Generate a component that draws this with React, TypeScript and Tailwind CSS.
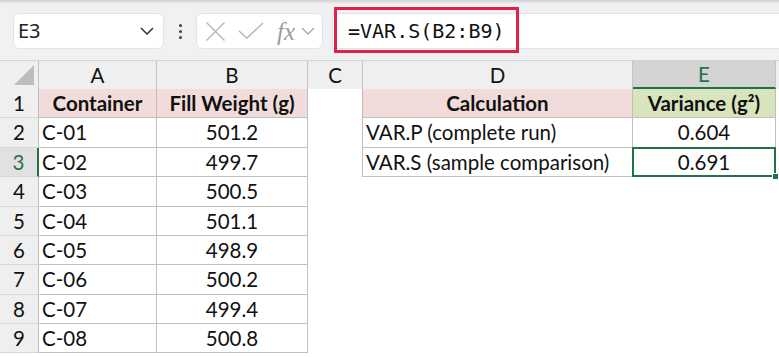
import React from 'react'

const rows = [
  { a: 'Container', b: 'Fill Weight (g)', d: 'Calculation', e: 'Variance (g²)', head: true },
  { a: 'C-01', b: '501.2', d: 'VAR.P (complete run)', e: '0.604' },
  { a: 'C-02', b: '499.7', d: 'VAR.S (sample comparison)', e: '0.691' },
  { a: 'C-03', b: '500.5' },
  { a: 'C-04', b: '501.1' },
  { a: 'C-05', b: '498.9' },
  { a: 'C-06', b: '500.2' },
  { a: 'C-07', b: '499.4' },
  { a: 'C-08', b: '500.8' },
]

const heights = ['h-[29px]', 'h-[30px]', 'h-[29px]', 'h-[30px]', 'h-[29px]', 'h-[29px]', 'h-[30px]', 'h-[29px]', 'h-[29px]']

const cellFont = { fontFamily: 'Lato, "Open Sans", sans-serif' }

const NameBox = () => (
  <div className="w-[151px] h-[36px] bg-white rounded-[6px] border border-[#e2e4e7] flex items-center justify-between pl-[4px] pr-[9px]">
    <span className="text-[20px] text-[#222]" style={{ fontFamily: '"Noto Sans", sans-serif' }}>E3</span>
    <svg width="14" height="8" viewBox="0 0 14 8">
      <path d="M1 1 L7 7 L13 1" fill="none" stroke="#333" strokeWidth="1.5" />
    </svg>
  </div>
)

const FxBox = () => (
  <div className="w-[127px] h-[36px] bg-white rounded-[6px] border border-[#e2e4e7] flex items-center pl-[8px]">
    <svg width="21" height="21" viewBox="0 0 21 21">
      <path d="M1.5 1.5 L19.5 19.5 M19.5 1.5 L1.5 19.5" stroke="#b5b5b5" strokeWidth="1.4" />
    </svg>
    <svg width="26" height="18" viewBox="0 0 26 18" className="ml-[12px]">
      <path d="M1 9 L9 16 L25 1" fill="none" stroke="#b5b5b5" strokeWidth="1.4" />
    </svg>
    <span className="ml-[13px] text-[25px] italic text-[#9c9c9c] leading-none" style={{ fontFamily: '"Liberation Serif", serif' }}>fx</span>
    <svg width="14" height="8" viewBox="0 0 14 8" className="ml-[6px]">
      <path d="M1 1 L7 7 L13 1" fill="none" stroke="#a8a8a8" strokeWidth="1.3" />
    </svg>
  </div>
)

export default function App() {
  return (
    <div className="w-[779px] h-[357px] overflow-hidden bg-white">
      <div className="h-[61px] bg-[#eff1f3] relative border-b border-[#d6d6d6]">
        <div className="h-[4px] bg-gradient-to-b from-[#cfd1d3] to-[#eff1f3]" />
        <div className="flex items-start pt-[9px] pl-[13px]">
          <NameBox />
          <div className="w-[32px] h-[36px] flex flex-col items-center justify-center gap-[3px]">
            <div className="w-[3px] h-[3px] rounded-full bg-[#444]" />
            <div className="w-[3px] h-[3px] rounded-full bg-[#444]" />
            <div className="w-[3px] h-[3px] rounded-full bg-[#444]" />
          </div>
          <FxBox />
          <div className="flex-1 ml-[9px] h-[36px] bg-white border-y border-l border-[#e2e4e7] relative flex items-center">
            <span className="pl-[15px] text-[20px] text-[#111]" style={{ fontFamily: '"DejaVu Sans Mono", monospace' }}>=VAR.S(B2:B9)</span>
            <div className="absolute left-[1px] top-[-7px] w-[185px] h-[46px] border-[3px] border-[#e0224b]" />
          </div>
        </div>
      </div>

      <div style={cellFont} className="text-[20.5px] text-[#111]">
        <div className="flex h-[28px] bg-[#efefef]">
          <div className="w-[39px] border-r border-[#c4c4c4] flex items-end justify-end">
            <svg width="20" height="20" viewBox="0 0 20 20" className="mb-[4px] mr-[4px]">
              <path d="M20 0 L20 20 L0 20 Z" fill="#bdbdbd" />
            </svg>
          </div>
          <div className="w-[118px] border-r border-[#c4c4c4] flex items-center justify-center">A</div>
          <div className="w-[151px] border-r border-[#c4c4c4] flex items-center justify-center">B</div>
          <div className="w-[55px] border-r border-[#c4c4c4] flex items-center justify-center">C</div>
          <div className="w-[270px] border-r border-[#c4c4c4] flex items-center justify-center">D</div>
          <div className="w-[143px] bg-[#d3d3d3] border-r border-[#c4c4c4] border-b-2 border-b-[#217346] text-[#217346] flex items-center justify-center">E</div>
        </div>

        {rows.map((r, i) => {
          const n = i + 1
          const active = n === 3
          const hasDE = n <= 3
          return (
            <div key={n} className={`flex ${heights[i]}`}>
              <div
                className={
                  active
                    ? 'w-[39px] bg-[#e1e1e1] text-[#217346] border-r-2 border-[#217346] border-b border-b-[#d6d6d6] flex items-center justify-center'
                    : 'w-[39px] bg-[#efefef] border-r border-[#bdbdbd] border-b border-b-[#d6d6d6] flex items-center justify-center'
                }
              >
                {n}
              </div>
              <div
                className={
                  r.head
                    ? 'w-[118px] bg-[#f2dcdb] border-r border-b border-[#bfbfbf] flex items-center justify-center font-bold'
                    : 'w-[118px] border-r border-b border-[#bfbfbf] flex items-center pl-[3px]'
                }
              >
                {r.a}
              </div>
              <div
                className={
                  r.head
                    ? 'w-[151px] bg-[#f2dcdb] border-r border-b border-[#bfbfbf] flex items-center justify-center font-bold'
                    : 'w-[151px] border-r border-b border-[#bfbfbf] flex items-center justify-center'
                }
              >
                {r.b}
              </div>
              <div className={hasDE ? 'w-[55px] border-r border-[#bfbfbf]' : 'w-[55px]'} />
              {hasDE ? (
                <>
                  <div
                    className={
                      r.head
                        ? 'w-[270px] bg-[#f2dcdb] border-r border-b border-[#bfbfbf] flex items-center justify-center font-bold'
                        : 'w-[270px] border-r border-b border-[#bfbfbf] flex items-center pl-[3px]'
                    }
                  >
                    {r.d}
                  </div>
                  <div
                    className={
                      r.head
                        ? 'w-[143px] bg-[#d8e4bc] border-r border-b border-[#bfbfbf] flex items-center justify-center font-bold'
                        : 'w-[143px] border-r border-b border-[#bfbfbf] flex items-center justify-center relative'
                    }
                  >
                    {r.e}
                    {active && (
                      <div className="absolute left-[-1px] top-[-1px] right-[-1px] bottom-[-1px] border-2 border-[#217346]">
                        <div className="absolute right-[-5px] bottom-[-5px] w-[7px] h-[7px] bg-[#217346] border border-white" />
                      </div>
                    )}
                  </div>
                </>
              ) : null}
            </div>
          )
        })}
      </div>
    </div>
  )
}
